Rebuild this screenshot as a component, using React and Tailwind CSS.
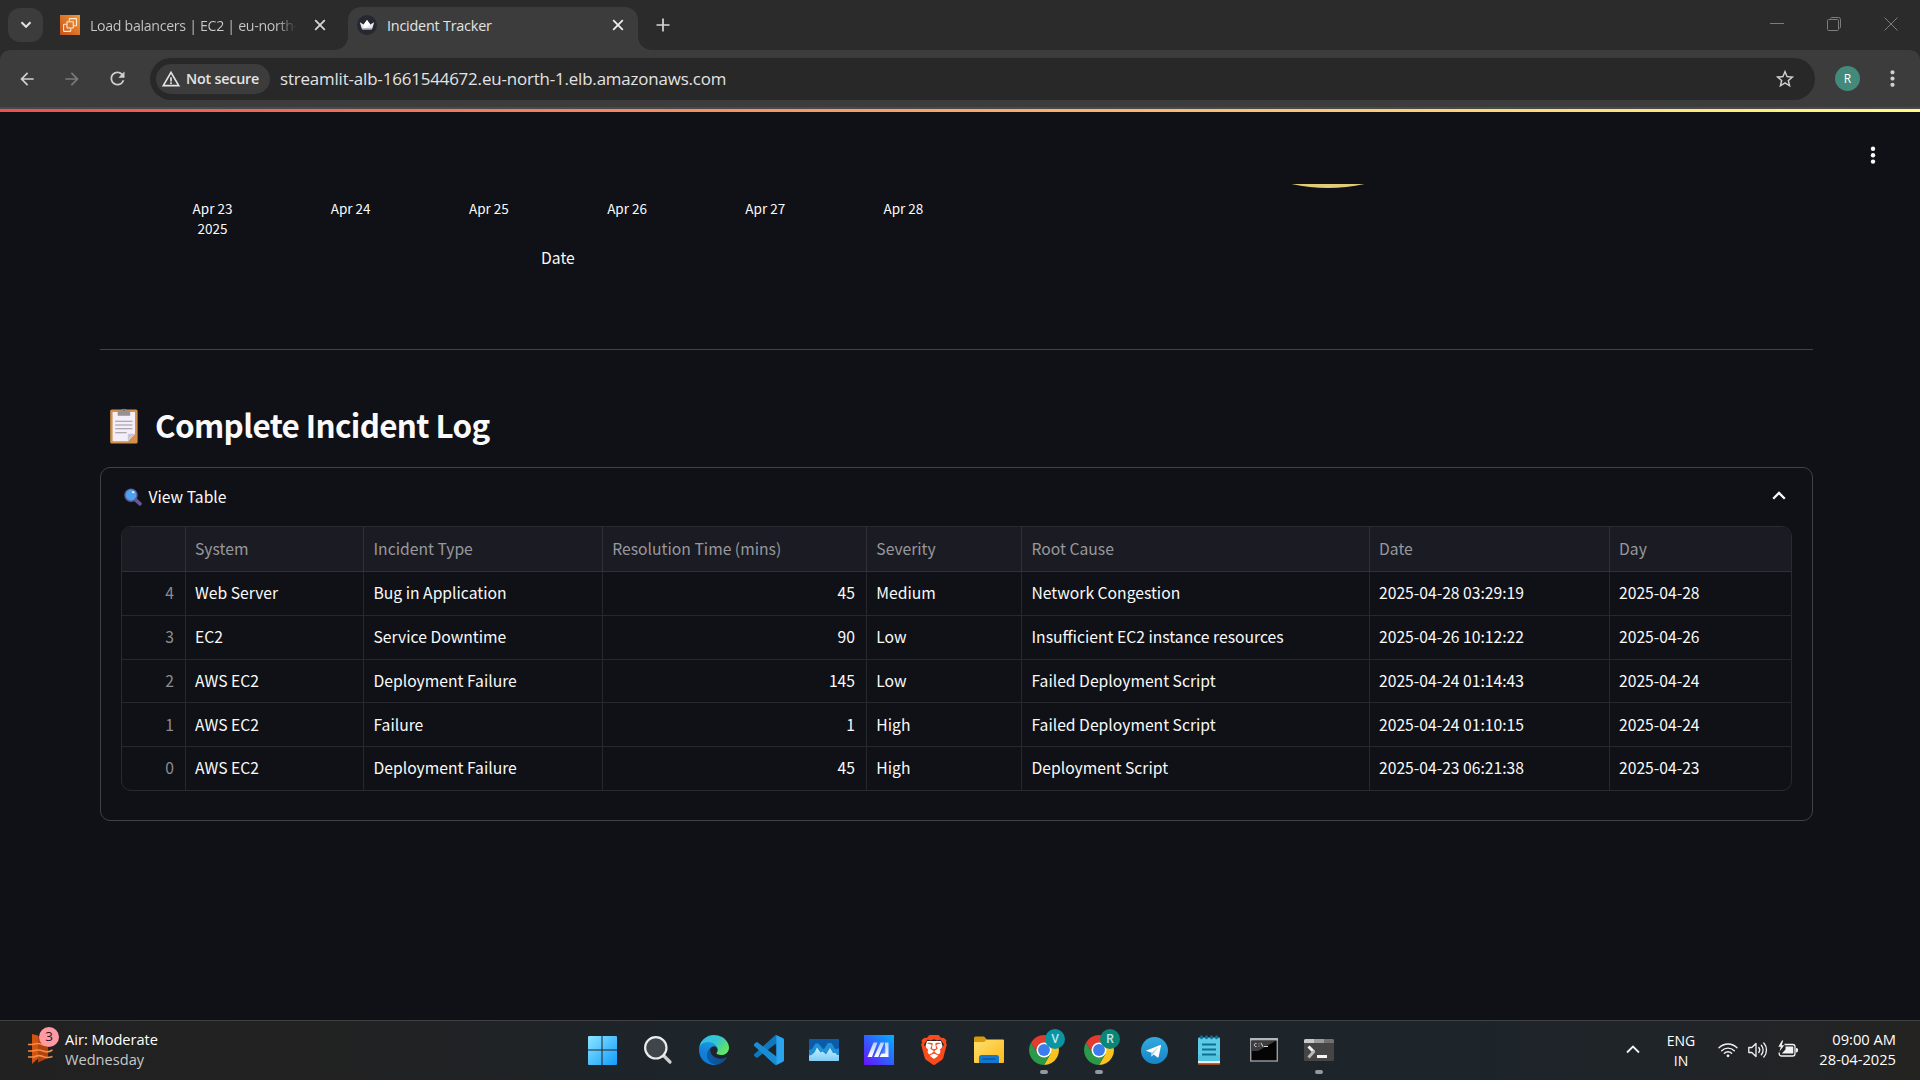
import React from "react";
import { MdArrowBack, MdArrowForward, MdRefresh, MdStarBorder, MdWarningAmber, MdMoreVert } from "react-icons/md";
import { SiBrave } from "react-icons/si";

const UI = "font-['Open_Sans',sans-serif]";
const SOURCE = "font-['Noto_Sans_CJK_SC',sans-serif]";

/* ---------- browser chrome ---------- */

function CloseX({ className = "" }) {
  return (
    <svg viewBox="0 0 12 12" className={"h-3 w-3 shrink-0 " + className} fill="none" stroke="currentColor" strokeWidth="1.8">
      <path d="M1.2 1.2l9.6 9.6M10.8 1.2l-9.6 9.6" />
    </svg>
  );
}

function Ec2Favicon() {
  return (
    <svg viewBox="0 0 20 20" className="h-5 w-5 shrink-0">
      <defs>
        <linearGradient id="ec2" x1="0" y1="1" x2="1" y2="0">
          <stop offset="0" stopColor="#c8511b" />
          <stop offset="1" stopColor="#f09a36" />
        </linearGradient>
      </defs>
      <rect width="20" height="20" fill="url(#ec2)" />
      <g fill="none" stroke="#fbe9da" strokeWidth="1.1">
        <rect x="7" y="6.7" width="6.3" height="6.3" rx=".5" />
        <path d="M9.3 6.2V4.2a.6.6 0 0 1 .6-.6h6a.6.6 0 0 1 .6.6v6a.6.6 0 0 1-.6.6h-2.2M6.4 9.2H4.2a.6.6 0 0 0-.6.6v6a.6.6 0 0 0 .6.6h6a.6.6 0 0 0 .6-.6v-2.3" />
      </g>
    </svg>
  );
}

function CrownFavicon() {
  return (
    <svg viewBox="0 0 20 20" className="h-5 w-5 shrink-0">
      <circle cx="10" cy="10" r="10" fill="#262730" />
      <path d="M2.8 7.2l3.9 2.4L10 5l3.3 4.6 3.9-2.4-2 6.6a1 1 0 0 1-.9.6H5.700a1 1 0 0 1-.9-.6z" fill="#e8e8ea" />
      <path d="M10 5l3.300 4.600-7 4.800L6.700 9.600z" fill="#fff" />
      <path d="M5 13.800h10" stroke="#9b9ba3" strokeWidth="1" />
    </svg>
  );
}

function TabStrip() {
  return (
    <div className="flex h-[50px] items-start bg-[#2b2b2b] text-[#c9c9c9]">
      <button className="ml-2 mt-2 flex h-[34px] w-[35px] items-center justify-center rounded-xl bg-[#3c3c3c]">
        <svg viewBox="0 0 12 8" className="h-2 w-3" fill="none" stroke="#e3e3e3" strokeWidth="2">
          <path d="M1.500 1.300L6 5.800l4.500-4.500" />
        </svg>
      </button>
      <div className="ml-[17px] flex h-[50px] w-[288px] items-center">
        <Ec2Favicon />
        <span className={"ml-[10px] mt-px w-[212px] whitespace-nowrap bg-gradient-to-r from-[#c9c9c9] from-88% to-[#2b2b2b] to-98% bg-clip-text text-[14.2px] leading-6 tracking-[-0.32px] text-transparent " + UI}>
          Load balancers | EC2 | eu-north-
        </span>
        <CloseX className="ml-[12px] text-[#d6d6d6]" />
      </div>
      <div className="relative mt-[7px] flex h-[43px] w-[290px] items-center rounded-t-[13px] bg-[#3c3c3c] text-[#e3e3e3]">
        <div className="absolute -left-[13px] bottom-0 h-[13px] w-[13px] bg-[radial-gradient(circle_at_0_0,transparent_12.5px,#3c3c3c_13px)]" />
        <div className="absolute -right-[13px] bottom-0 h-[13px] w-[13px] bg-[radial-gradient(circle_at_100%_0,transparent_12.5px,#3c3c3c_13px)]" />
        <div className="flex w-full items-center pb-[7px] pl-[9px]">
          <CrownFavicon />
          <span className={"ml-[10px] mt-px text-[14.4px] leading-6 tracking-[-0.22px] " + UI}>Incident Tracker</span>
          <CloseX className="ml-auto mr-[14.500px] text-[#ededed]" />
        </div>
      </div>
      <svg viewBox="0 0 14 14" className="ml-[17.500px] mt-[18px] h-[14px] w-[14px]" stroke="#d6d6d6" strokeWidth="1.700">
        <path d="M7 0.500v13M0.500 7h13" />
      </svg>
      <div className="ml-auto mr-[22px] mt-[17px] flex items-center gap-[43px]">
        <svg viewBox="0 0 14 14" className="h-[14px] w-[14px]" stroke="#7d7d7d" strokeWidth="1">
          <path d="M0 6.500h14" />
        </svg>
        <svg viewBox="0 0 14 14" className="h-[14px] w-[14px]" fill="none" stroke="#7d7d7d" strokeWidth="1">
          <path d="M3.500 1.500a1 1 0 0 1 1-1h7a2 2 0 0 1 2 2v7.500a1 1 0 0 1-1 1" />
          <rect x=".5" y="2.500" width="11" height="11" rx="1" />
        </svg>
        <svg viewBox="0 0 14 14" className="h-[14px] w-[14px]" stroke="#7d7d7d" strokeWidth="1">
          <path d="M.5.500l13 13M13.500.500l-13 13" />
        </svg>
      </div>
    </div>
  );
}

function Toolbar() {
  return (
    <div className="bg-[#2b2b2b]">
      <div className="flex h-[59px] items-center rounded-t-[10px] border-b-2 border-[#4a4a4a] bg-[#3c3c3c]">
        <div className="flex items-center gap-[25px] pl-[17px] text-[#d0d0d0]">
          <MdArrowBack size={20} />
          <MdArrowForward size={20} className="text-[#7a7a7a]" />
          <MdRefresh size={21} />
        </div>
        <div className="ml-[22px] flex h-[42px] w-[1665px] items-center rounded-full bg-[#282828] pl-[6px]">
          <div className="flex h-[30px] w-[114px] items-center rounded-full bg-[#3c3c3c] pl-[5px] text-[#e3e3e3]">
            <MdWarningAmber size={20} />
            <span className={"ml-[5px] whitespace-nowrap text-[14.3px] font-semibold tracking-[-0.2px] " + UI}>Not secure</span>
          </div>
          <span className={"ml-[10px] mt-px text-[16.900px] tracking-[-0.160px] text-[#e3e3e3] " + UI}>
            streamlit-alb-1661544672.eu-north-1.elb.amazonaws.com
          </span>
          <MdStarBorder size={22} className="ml-auto mr-[19px] mt-px text-[#d0d0d0]" />
        </div>
        <div className={"ml-[20px] flex h-[25px] w-[25px] items-center justify-center rounded-full bg-[#438a7a] text-[12px] text-white " + UI}>R</div>
        <MdMoreVert size={25} className="ml-[20px] text-[#d0d0d0]" />
      </div>
    </div>
  );
}

/* ---------- page ---------- */

const TICKS = ["Apr 23", "Apr 24", "Apr 25", "Apr 26", "Apr 27", "Apr 28"];

function ChartsFooter() {
  return (
    <div className="flex h-[237px] items-start pl-[100px]">
      <div className="w-[829px] pl-[43.400px] pt-[86px] text-[#fafafa]">
        <div className="grid grid-cols-[repeat(6,138.200px)] text-center text-[13.500px] leading-5">
          {TICKS.map((t, i) => (
            <div key={t} className="h-10">
              <div>{t}</div>
              {i === 0 && <div>2025</div>}
            </div>
          ))}
        </div>
        <div className="mt-[8px] w-[829px] text-center text-[15.700px] leading-6">Date</div>
      </div>
      <svg viewBox="0 0 80 6" className="ml-[359px] mt-[72px] h-[6px] w-[80px]">
        <path d="M3.500 0A168 168 0 0 0 76.500 0z" fill="#e0cb79" />
      </svg>
      <svg viewBox="0 0 6 18" className="ml-auto mr-[44.500px] mt-[33.500px] h-[18px] w-[6px]" fill="#fafafa">
        <circle cx="3" cy="2.800" r="2.200" />
        <circle cx="3" cy="9.200" r="2.200" />
        <circle cx="3" cy="15.600" r="2.200" />
      </svg>
    </div>
  );
}

function Clipboard() {
  return (
    <svg viewBox="0 0 28 36" className="mt-px h-9 w-7 shrink-0">
      <rect x=".2" y="1.500" width="27.400" height="34" rx="1.600" fill="#d3914d" />
      <path d="M2.600 4h22.400v22l-7 7.200H2.600z" fill="#f3eef8" />
      <path d="M25 25.800l-7.200 7.400v-6.200q0-1.200 1.200-1.200z" fill="#cdc4d6" />
      <path d="M7.700 2.500h3.300a3 2.300 0 0 1 5.800 0h3.400v5.200H7.700z" fill="#998f8f" />
      <circle cx="13.900" cy="2" r=".8" fill="#554d50" />
      <g stroke="#9a929c" strokeWidth="1.100">
        <path d="M5.200 13.300h17.200M5.200 17h17.200M5.200 20.700h17.200M5.200 24.700h11.500" />
      </g>
    </svg>
  );
}

function Magnifier() {
  return (
    <svg viewBox="0 0 18 18" className="h-[18px] w-[18px] shrink-0">
      <path d="M10.500 10.800l5.500 5" stroke="#635994" strokeWidth="3.600" strokeLinecap="round" />
      <circle cx="7" cy="7.200" r="6.700" fill="#5b5a9e" />
      <circle cx="7" cy="7" r="5.400" fill="#4ea1ea" />
      <ellipse cx="9.200" cy="4.200" rx="1.300" ry="1" fill="#eaf6ff" />
    </svg>
  );
}

const GRID = "grid grid-cols-[64px_178px_239px_264px_155px_348px_240px_181px]";
const HEAD = ["", "System", "Incident Type", "Resolution Time (mins)", "Severity", "Root Cause", "Date", "Day"];
const INSET = ["pl-0", "pl-[9px]", "pl-[9.500px]", "pl-[9.300px]", "pl-[9.300px]", "pl-[9.500px]", "pl-[9px]", "pl-[9px]"];
const ROWS = [
  ["4", "Web Server", "Bug in Application", "45", "Medium", "Network Congestion", "2025-04-28 03:29:19", "2025-04-28"],
  ["3", "EC2", "Service Downtime", "90", "Low", "Insufficient EC2 instance resources", "2025-04-26 10:12:22", "2025-04-26"],
  ["2", "AWS EC2", "Deployment Failure", "145", "Low", "Failed Deployment Script", "2025-04-24 01:14:43", "2025-04-24"],
  ["1", "AWS EC2", "Failure", "1", "High", "Failed Deployment Script", "2025-04-24 01:10:15", "2025-04-24"],
  ["0", "AWS EC2", "Deployment Failure", "45", "High", "Deployment Script", "2025-04-23 06:21:38", "2025-04-23"],
];
const ROW_HEIGHTS = ["h-[44px]", "h-[44px]", "h-[43px]", "h-[44px]", "h-[43px]"];
const ROW_NUDGE = ["pb-px", "pb-px", "pb-px", "pb-0", "pb-px"];

function IncidentTable() {
  return (
    <div className="mx-[20px] overflow-hidden rounded-[10px] border border-[#292a2f] text-[15.700px] leading-none">
      <div className={GRID + " h-[45px] border-b border-[#303137] bg-[#1b1c23] text-[#98989c]"}>
        {HEAD.map((h, i) => (
          <div key={i} className={"flex items-center whitespace-nowrap border-r border-[#303137] last:border-r-0 " + INSET[i]}>
            {h}
          </div>
        ))}
      </div>
      {ROWS.map((row, r) => (
        <div key={r} className={GRID + " border-b border-[#27282d] last:border-b-0 " + ROW_HEIGHTS[r]}>
          {row.map((cell, c) => (
            <div
              key={c}
              className={
                "flex items-center whitespace-nowrap border-r border-[#27282d] last:border-r-0 " +
                ROW_NUDGE[r] +
                (c === 0
                  ? " justify-end pr-[11px] text-[#8c8c90]"
                  : c === 3
                    ? " justify-end pr-[11px] text-[#fafafa]"
                    : " text-[#fafafa] " + INSET[c])
              }
            >
              {cell}
            </div>
          ))}
        </div>
      ))}
    </div>
  );
}

function Page() {
  return (
    <main className={"flex h-[911px] flex-col bg-[#0f1116] " + SOURCE}>
      <div className="h-[3px] shrink-0 bg-[linear-gradient(90deg,#f04f50,#fbc274_66%,#fffd80)]" />
      <ChartsFooter />
      <div className="ml-[100px] w-[1713px]">
        <div className="h-px bg-[#414247]" />
        <h2 className="mt-[53px] flex h-[44px] items-center pl-[10px] text-[31.400px] font-bold leading-[44px] tracking-[-0.640px] text-[#fafafa]">
          <Clipboard />
          <span className="ml-[17px] whitespace-nowrap">Complete Incident Log</span>
        </h2>
        <section className="mt-[20px] h-[354px] rounded-[10px] border border-[#414247]">
          <div className="flex h-[58px] items-center pl-[23px] pr-[26px] text-[15.700px] leading-6 text-[#fafafa]">
            <Magnifier />
            <span className="ml-[6.500px]">View Table</span>
            <svg viewBox="0 0 14 9" className="mb-[4px] ml-auto h-[9px] w-[14px]" fill="none" stroke="#fafafa" strokeWidth="2.300">
              <path d="M1.200 7.800L7 2l5.800 5.800" />
            </svg>
          </div>
          <IncidentTable />
        </section>
      </div>
    </main>
  );
}

/* ---------- taskbar icons ---------- */

function StartIcon() {
  return (
    <svg viewBox="0 0 30 30" className="mr-[4px] h-[30px] w-[30px]">
      <defs>
        <linearGradient id="win" x1="0" y1="0" x2="1" y2="1">
          <stop offset="0" stopColor="#8ce6ff" />
          <stop offset="1" stopColor="#129bfb" />
        </linearGradient>
      </defs>
      <path fill="url(#win)" d="M2 1h12.500v13.500H1V2a1 1 0 0 1 1-1zM15.500 1H29a1 1 0 0 1 1 1v12.500H15.500zM1 15.500h13.500V30H2a1 1 0 0 1-1-1zM15.500 15.500H30V29a1 1 0 0 1-1 1H15.500z" />
    </svg>
  );
}

function SearchIcon() {
  return (
    <svg viewBox="0 0 30 30" className="mr-[2px] h-[30px] w-[30px]">
      <path d="M20.500 20.500l6.500 6.500" stroke="#cfcfcf" strokeWidth="3.200" strokeLinecap="round" />
      <circle cx="12.800" cy="12.800" r="10.700" fill="#3f4548" stroke="#ececec" strokeWidth="2.200" />
    </svg>
  );
}

function EdgeIcon() {
  return (
    <svg viewBox="0 0 256 256" className="h-[30px] w-[30px]">
      <defs>
        <linearGradient id="e1" x1="0.250" y1="0.700" x2="1" y2="0.700">
          <stop offset="0" stopColor="#0c59a4" />
          <stop offset="1" stopColor="#114a8b" />
        </linearGradient>
        <linearGradient id="e2" x1="0.600" y1="0" x2="0.300" y2="1">
          <stop offset="0" stopColor="#1b9de2" />
          <stop offset=".5" stopColor="#1481d8" />
          <stop offset="1" stopColor="#0a7bd8" />
        </linearGradient>
        <linearGradient id="e3" x1="0" y1="0.200" x2="1" y2="0.800">
          <stop offset="0" stopColor="#2fbdea" />
          <stop offset=".5" stopColor="#37c6cf" />
          <stop offset=".8" stopColor="#5adf72" />
          <stop offset="1" stopColor="#66eb6e" />
        </linearGradient>
      </defs>
      <path fill="url(#e1)" d="M231 190.500c-3.400 1.800-6.900 3.400-10.500 4.700a101.400 101.400 0 0 1-35.900 6.500c-47.300 0-88.500-32.500-88.500-74.300a31.500 31.500 0 0 1 16.400-27.300c-42.800 1.800-53.800 46.400-53.800 72.500 0 73.900 68.100 81.400 82.800 81.400 7.900 0 19.800-2.300 27-4.600l1.300-.4a128.300 128.300 0 0 0 66.600-52.800 4 4 0 0 0-5.400-5.700z" />
      <path fill="url(#e2)" d="M105.700 241.400a79.200 79.200 0 0 1-22.700-21.300 80.700 80.700 0 0 1 29.500-120c3.200-1.500 8.500-4.100 15.600-4a32.400 32.400 0 0 1 25.700 13 31.900 31.900 0 0 1 6.300 18.700c0-.2 24.500-79.600-80-79.600-43.900 0-80 41.600-80 78.200a130.200 130.200 0 0 0 12.100 56 128 128 0 0 0 156.400 67.100 75.600 75.600 0 0 1-62.800-8z" />
      <path fill="url(#e3)" d="M152.300 148.900c-.9 1-3.400 2.500-3.400 5.600 0 2.600 1.700 5.200 4.800 7.300 14.300 10 41.400 8.600 41.500 8.600a59.600 59.600 0 0 0 30.300-8.300 61.400 61.400 0 0 0 30.400-52.900c.3-22.400-8-37.300-11.300-43.900C223.500 23.900 177.700 0 128 0A128 128 0 0 0 0 126.200c.5-36.500 36.800-66 80-66 3.500 0 23.500.3 42 10a72.600 72.600 0 0 1 30.900 29.300c6.100 10.600 7.200 24.100 7.200 29.500s-2.700 13.300-7.800 19.900z" />
    </svg>
  );
}

function VsCodeIcon() {
  return (
    <svg viewBox="0 0 24 24" className="h-[30px] w-[30px]">
      <path fill="#0f78bd" d="M23.150 2.587L18.210.21a1.494 1.494 0 0 0-1.705.29l-9.460 8.630-4.120-3.128a.999.999 0 0 0-1.276.057L.327 7.261A1 1 0 0 0 .326 8.740L3.899 12 .326 15.260a1 1 0 0 0 .001 1.479L1.650 17.940a.999.999 0 0 0 1.276.057l4.120-3.128 9.460 8.630a1.492 1.492 0 0 0 1.704.29l4.942-2.377A1.500 1.500 0 0 0 24 20.060V3.939a1.500 1.500 0 0 0-.85-1.352zm-5.146 14.861L10.826 12l7.178-5.448v10.896z" />
      <path fill="#1b8cd4" d="M.326 8.740a1 1 0 0 1 0-1.479L1.650 6.060a1 1 0 0 1 1.276-.057l15.078 11.445v5.800q-.6.900-1.500.252z" />
      <path fill="#2aa4ee" d="M17.900.100l5.250 2.487A1.500 1.500 0 0 1 24 3.939V20.060a1.500 1.500 0 0 1-.85 1.354L17.900 23.900z" />
    </svg>
  );
}

function MonitorIcon() {
  return (
    <svg viewBox="0 0 30 22" className="h-[22px] w-[30px]">
      <defs>
        <linearGradient id="mon" x1="0" y1="0" x2="0" y2="1">
          <stop offset="0" stopColor="#c9ecff" />
          <stop offset="1" stopColor="#7dcdf6" />
        </linearGradient>
      </defs>
      <rect width="30" height="22" rx="1" fill="#0c5ba8" />
      <path d="M0 11l3-1 3.500-5.500h3L14 10h1l4-6h3.500l3.500 6 4-.500v12H0z" fill="#1f8fd6" />
      <path d="M0 16.500l2.500-.5 3-2.500L8 8.500l3.500 5 2-1 2 1.500 1.500 1.500L21 9l3 5h2.500l1.500 2h2v5a1 1 0 0 1-1 1H1a1 1 0 0 1-1-1z" fill="url(#mon)" />
    </svg>
  );
}

function MxIcon() {
  return (
    <svg viewBox="0 0 30 30" className="h-[30px] w-[30px]">
      <defs>
        <linearGradient id="mx" x1="0" y1="1" x2="1" y2="0">
          <stop offset="0" stopColor="#6a10ff" />
          <stop offset=".5" stopColor="#3060ff" />
          <stop offset="1" stopColor="#00b4ff" />
        </linearGradient>
        <linearGradient id="mxs" x1="0" y1="1" x2="0" y2="0">
          <stop offset="0" stopColor="#fff" />
          <stop offset="1" stopColor="#b9ccff" />
        </linearGradient>
      </defs>
      <rect width="30" height="30" fill="url(#mx)" />
      <path d="M3.500 22L9.500 7.500h4L8 22zM10 22L16.500 7.500h3.800L14.300 22z" fill="url(#mxs)" />
      <path d="M21 7.500h3.500V22h-9l1.800-3.500h3.700z" fill="url(#mxs)" />
      <path d="M21.300 11v7h-3.200z" fill="#5c86ff" />
      <circle cx="20.300" cy="20.200" r="1.400" fill="#fff" />
    </svg>
  );
}

function BraveIcon() {
  return (
    <div className="relative flex h-[30px] w-[30px] items-center justify-center">
      <svg viewBox="0 0 30 30" className="absolute inset-0 h-[30px] w-[30px]">
        <path d="M8 6h14l1.500 5-2.500 9-6 5-6-5-2.500-9z" fill="#fff" />
      </svg>
      <SiBrave size={30} className="relative text-[#fb4a1c]" />
    </div>
  );
}

function FolderIcon() {
  return (
    <svg viewBox="0 0 30 28" className="h-[28px] w-[30px]">
      <defs>
        <linearGradient id="fol" x1="0" y1="0" x2="1" y2="1">
          <stop offset="0" stopColor="#ffdf70" />
          <stop offset="1" stopColor="#fbb917" />
        </linearGradient>
      </defs>
      <path d="M0 2a1.500 1.500 0 0 1 1.500-1.500h8.500L13 3.500V9H0z" fill="#dc9a0a" />
      <path d="M0 6h10l3-2.500h16a1 1 0 0 1 1 1V26a1 1 0 0 1-1 1H1a1 1 0 0 1-1-1z" fill="url(#fol)" />
      <path d="M5 27v-5.500a2.500 2.500 0 0 1 2.500-2.500h15a2.500 2.500 0 0 1 2.500 2.500V27z" fill="#1177cf" />
      <path d="M8.500 23h13" stroke="#0b4f94" strokeWidth="1.200" />
    </svg>
  );
}

function ChromeIcon({ letter, badge }) {
  return (
    <div className="relative h-[30px] w-[30px]">
      <svg viewBox="0 0 48 48" className="h-[30px] w-[30px]">
        <path d="M24 12h20.780A24 24 0 0 0 3.220 12L13.610 30z" fill="#e33b2e" />
        <path d="M34.390 30L24 48A24 24 0 0 0 44.780 12H24z" fill="#fcc31e" />
        <path d="M13.610 30L3.220 12A24 24 0 0 0 24 48l10.390-18z" fill="#2a9a48" />
        <circle cx="24" cy="24" r="12" fill="#fff" />
        <circle cx="24" cy="24" r="9.500" fill="#3b7ded" />
      </svg>
      <span className={"absolute -top-[6px] left-[16px] flex h-5 w-5 items-center justify-center rounded-full text-[12px] font-medium text-[#b9e6e6] font-['Roboto',sans-serif] " + badge}>
        {letter}
      </span>
    </div>
  );
}

function TelegramIcon() {
  return (
    <svg viewBox="0 0 24 24" className="h-[27px] w-[27px]">
      <defs>
        <linearGradient id="tg" x1="0" y1="0" x2="0" y2="1">
          <stop offset="0" stopColor="#34aadf" />
          <stop offset="1" stopColor="#1784c6" />
        </linearGradient>
      </defs>
      <circle cx="12" cy="12" r="12" fill="url(#tg)" />
      <path fill="#fff" d="M4.800 12.100l12.300-5q.8-.2.700.7l-2.100 9.800q-.3 1-1.200.4l-3.200-2.400-1.700 1.600q-.4.300-.4-.4l.3-2.900-4.600-1.400q-.8-.3-.1-.8z" />
      <path fill="#a9cfe8" d="M9.500 13.900l6.300-5.100-4.800 5.900-1.400 2.500z" />
    </svg>
  );
}

function NotepadIcon() {
  return (
    <svg viewBox="0 0 22 30" className="h-[30px] w-[22px]">
      <rect y="27.500" width="22" height="2.500" rx=".8" fill="#a04a10" />
      <rect y="25" width="22" height="3.200" fill="#e9eef0" />
      <rect y="2.500" width="22" height="23.500" rx="1" fill="#5ccbe6" />
      <path d="M0 20h22v6H0z" fill="#49b9d8" opacity=".5" />
      <path d="M3.500 1.500v1.500M8.500 1.500v1.500M13.500 1.500v1.500M18.500 1.500v1.500" stroke="#0d6f96" strokeWidth="2.600" strokeLinecap="round" />
      <path d="M4 9.500h14M4 14.500h14M4 19.500h14" stroke="#0f6f94" strokeWidth="1.800" />
    </svg>
  );
}

function CmdIcon() {
  return (
    <svg viewBox="0 0 28 24" className="h-[24px] w-[28px]">
      <rect x=".7" y=".7" width="26.600" height="22.300" fill="#050505" stroke="#9b9da0" strokeWidth="1.400" />
      <path d="M0 0h28v2.500H0z" fill="#b4b7ba" />
      <path d="M1.500 3h24L8 13H1.500z" fill="#3c3d40" />
      <path d="M6.500 5.500a1.600 1.600 0 1 0 0 3M9 5.500v.8M9 7.700v.8M11 4.800l2 4M14 8.500h4" fill="none" stroke="#dadada" strokeWidth="1" />
    </svg>
  );
}

function TerminalIcon() {
  return (
    <svg viewBox="0 0 30 22" className="h-[22px] w-[30px]">
      <rect width="30" height="22" rx="1.500" fill="#454546" />
      <path d="M0 1.500A1.500 1.500 0 0 1 1.500 0H10v4H0z" fill="#c9c9ca" />
      <path d="M10 0h10v4H10z" fill="#9c9c9e" />
      <path d="M20 0h8.500A1.500 1.500 0 0 1 30 1.500V4H20z" fill="#707073" />
      <path d="M4.500 7.500l5.500 5.500" stroke="#f2f2f2" strokeWidth="3" />
      <path d="M10.300 12l-5.800 6.500" stroke="#b8b8b8" strokeWidth="3" />
      <path d="M13 17.500h10" stroke="#f5f5f5" strokeWidth="3" />
    </svg>
  );
}

function AirIcon() {
  return (
    <div className="relative h-[30px] w-[25px]">
      <svg viewBox="0 0 25 30" className="h-[30px] w-[25px]">
        <path d="M4 0l6 1.500v23L4 30z" fill="#d1530f" />
        <path d="M10 2l10 5v17l-10 4.500z" fill="#b0420c" />
        <path fill="none" stroke="#f28b4b" strokeWidth="1.700" d="M0 10.500h5q5-2 9 0t6 0M0 17h5q5-2 10 0t9.500-1M0 23h6q5-2.500 9-.5t9.500 0" />
      </svg>
      <span className={"absolute -top-[7px] left-[11px] flex h-5 w-5 items-center justify-center rounded-full bg-[#ff99a4] text-[13.500px] leading-none text-[#2a1518] " + UI}>3</span>
    </div>
  );
}

const APPS = [
  { icon: <StartIcon /> },
  { icon: <SearchIcon /> },
  { icon: <EdgeIcon /> },
  { icon: <VsCodeIcon /> },
  { icon: <MonitorIcon /> },
  { icon: <MxIcon /> },
  { icon: <BraveIcon /> },
  { icon: <FolderIcon /> },
  { icon: <ChromeIcon letter="V" badge="bg-[#0995a4]" />, open: true },
  { icon: <ChromeIcon letter="R" badge="bg-[#0a8577]" />, open: true },
  { icon: <TelegramIcon /> },
  { icon: <NotepadIcon /> },
  { icon: <CmdIcon /> },
  { icon: <TerminalIcon />, open: true },
];

function Taskbar() {
  return (
    <footer className={"flex h-[60px] items-start border-t border-[#3f4144] bg-[linear-gradient(90deg,#212121,#212223_20%,#1d242a_35%,#1d242a_75%,#202428_88%,#242322)] text-[14.600px] leading-5 text-white " + UI}>
      <div className="flex w-[576.500px] items-start pl-[28px]">
        <div className="mt-[13px]"><AirIcon /></div>
        <div className="ml-[12px] mt-[8px]">
          <div>Air: Moderate</div>
          <div className="text-[#c8c8c8]">Wednesday</div>
        </div>
      </div>
      <div className="flex">
        {APPS.map((a, i) => (
          <div key={i} className="flex h-[59px] w-[55px] flex-col items-center pt-[14px]">
            <div className="flex h-[30px] items-center">{a.icon}</div>
            {a.open && <div className="mt-[5px] h-1 w-2 rounded-full bg-[#96999c]" />}
          </div>
        ))}
      </div>
      <div className="ml-auto flex items-start pr-[24px]">
        <svg viewBox="0 0 14 9" className="mt-[24px] h-[9px] w-[14px]" fill="none" stroke="#f2f2f2" strokeWidth="1.800">
          <path d="M1 7.500L7 1.500l6 6" />
        </svg>
        <div className="ml-[26px] mt-[10px] w-[30px] text-center text-[14px]">
          <div>ENG</div>
          <div>IN</div>
        </div>
        <svg viewBox="0 0 20 16" className="ml-[22px] mt-[21px] h-4 w-5" fill="none" stroke="#f2f2f2" strokeWidth="1.400" strokeLinecap="round">
          <path d="M1 5.800a12.700 12.700 0 0 1 18 0M3.700 8.700a8.900 8.900 0 0 1 12.600 0M6.400 11.300a5.100 5.100 0 0 1 7.200 0" />
          <circle cx="10" cy="13.800" r="1.400" fill="#f2f2f2" stroke="none" />
        </svg>
        <svg viewBox="0 0 20 18" className="ml-[10px] mt-[20px] h-[18px] w-5" fill="none" stroke="#f2f2f2" strokeWidth="1.300" strokeLinecap="round" strokeLinejoin="round">
          <path d="M.8 6.500h3L8 2.500v13l-4.200-4h-3zM10.800 6.500a4 4 0 0 1 0 5M13.300 4.300a7 7 0 0 1 0 9.400M15.800 2a10.500 10.500 0 0 1 0 14" />
        </svg>
        <svg viewBox="0 0 22 18" className="ml-[9px] mt-[19px] h-[18px] w-[22px]" fill="none" stroke="#f2f2f2" strokeWidth="1.300">
          <path d="M7.500 4.500h8.200a2.300 2.300 0 0 1 2.300 2.300v6.900a2.300 2.300 0 0 1-2.300 2.300H4.500a2.300 2.300 0 0 1-2.300-2.300v-1.200" />
          <path d="M8.500 6.500h7a.8.8 0 0 1 .8.8v6.200h-11.500l3.700-4z" fill="#f2f2f2" stroke="none" />
          <path d="M19 8v4.500a2 2 0 0 0 2-2.200 2 2 0 0 0-2-2.300z" fill="#f2f2f2" stroke="none" />
          <path d="M5 .5L1.300 6.800h2.500L2.500 11.500l4.700-6.200H4.700L6.200.5z" fill="#f2f2f2" stroke="none" />
        </svg>
        <div className="ml-[19px] mt-[8px] w-[78px] whitespace-nowrap text-right text-[14.700px]">
          <div>09:00 AM</div>
          <div>28-04-2025</div>
        </div>
      </div>
    </footer>
  );
}

export default function App() {
  return (
    <div className="flex h-[1080px] w-[1920px] flex-col overflow-hidden bg-[#0f1116]">
      <TabStrip />
      <Toolbar />
      <Page />
      <Taskbar />
    </div>
  );
}
